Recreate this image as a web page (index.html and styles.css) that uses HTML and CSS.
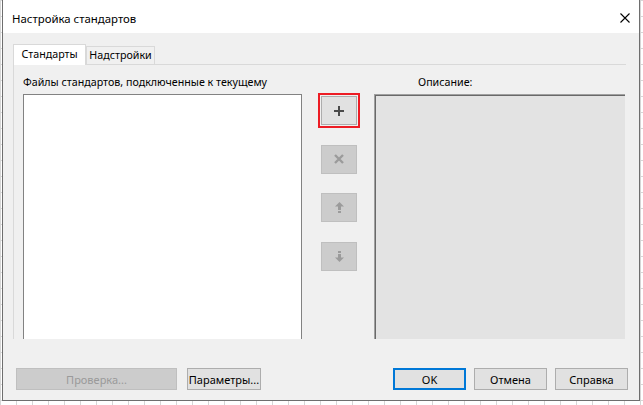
FILE: index.html
```html
<!DOCTYPE html>
<html lang="ru">
<head>
<meta charset="utf-8">
<title>Настройка стандартов</title>
<link rel="stylesheet" href="styles.css">
</head>
<body>
<div class="dialog">
  <div class="titlebar">
    <span class="title">Настройка стандартов</span>
    <svg class="close" width="10" height="10" viewBox="0 0 10 10"><path d="M0.5 0.5 L9.5 9.5 M9.5 0.5 L0.5 9.5" stroke="#000" stroke-width="1.1" fill="none"/></svg>
  </div>
  <div class="content">
    <div class="tabs">
      <div class="tab active">Стандарты</div>
      <div class="tab inactive">Надстройки</div>
    </div>
    <div class="panel">
      <div class="col-list">
        <div class="label">Файлы стандартов, подключенные к текущему</div>
        <div class="listbox"></div>
      </div>
      <div class="col-buttons">
        <div class="icon-btn focused">
          <svg width="10" height="10" viewBox="0 0 10 10"><path d="M5 0 V10 M0 5 H10" stroke="#4a4a4a" stroke-width="2" fill="none"/></svg>
        </div>
        <div class="icon-btn disabled">
          <svg width="10" height="10" viewBox="0 0 10 10"><path d="M1 1 L9 9 M9 1 L1 9" stroke="#9b9b9b" stroke-width="2.4" fill="none"/></svg>
        </div>
        <div class="icon-btn disabled">
          <svg width="9" height="11" viewBox="0 0 9 11"><path d="M0 4.5 L4.5 0 L9 4.5 Z" fill="#9b9b9b"/><rect x="3" y="4" width="3" height="4" fill="#9b9b9b"/><rect x="3" y="9" width="3" height="2" fill="#9b9b9b"/></svg>
        </div>
        <div class="icon-btn disabled">
          <svg width="9" height="11" viewBox="0 0 9 11"><rect x="3" y="0" width="3" height="2" fill="#9b9b9b"/><rect x="3" y="3" width="3" height="4" fill="#9b9b9b"/><path d="M0 6.5 L4.5 11 L9 6.5 Z" fill="#9b9b9b"/></svg>
        </div>
      </div>
      <div class="col-desc">
        <div class="label desc-label">Описание:</div>
        <div class="descbox"></div>
      </div>
    </div>
    <div class="bottom">
      <div class="btn disabled w-check">Проверка...</div>
      <div class="btn w-params">Параметры...</div>
      <div class="spacer"></div>
      <div class="btn default w-std">OK</div>
      <div class="btn w-std">Отмена</div>
      <div class="btn w-std">Справка</div>
    </div>
  </div>
</div>
</body>
</html>
```

FILE: styles.css
```css
* { box-sizing: border-box; }
html, body { margin: 0; padding: 0; }
body {
  width: 643px;
  height: 405px;
  overflow: hidden;
  padding-left: 2px;
  background-color: #ffffff;
  background-image:
    linear-gradient(to right, #d6d6d6 1px, transparent 1px),
    linear-gradient(to bottom, #d6d6d6 1px, transparent 1px);
  background-size: 16px 16px;
  font-family: "Noto Sans", "Open Sans", sans-serif;
  font-size: 10.7px;
  color: #000;
}
.dialog {
  width: 638px;
  height: 401px;
  border: 1px solid #6e6e6e;
  border-top: none;
  display: flex;
  flex-direction: column;
  background: #f0f0f0;
}
.titlebar {
  height: 33px;
  flex: none;
  background: #fff;
  display: flex;
  align-items: center;
  padding: 4px 9px 0 9px;
}
.title {
  font-size: 11.4px;
  flex: 1;
}
.close { display: block; margin-top: -1px; }
.content {
  flex: 1;
  display: flex;
  flex-direction: column;
  padding: 11px 11px 10px 10px;
}
.tabs {
  display: flex;
  align-items: flex-end;
  height: 20px;
  position: relative;
  z-index: 1;
}
.tab {
  height: 18px;
  border: 1px solid #d9d9d9;
  border-bottom: none;
  background: #f0f0f0;
  line-height: 16px;
  text-align: center;
  white-space: nowrap;
}
.tab.inactive { width: 69px; }
.tab.active {
  width: 73px;
  height: 21px;
  margin-bottom: -1px;
  background: #fff;
  padding-top: 1px;
}
.panel {
  height: 275px;
  width: 613px;
  border-top: 1px solid #d9d9d9;
  border-left: 1px solid #d9d9d9;
  overflow: hidden;
  display: flex;
  padding: 10px 0 0 9px;
}
.label {
  height: 14px;
  line-height: 14px;
  white-space: nowrap;
}
.col-list { width: 279px; }
.listbox {
  margin-top: 5px;
  width: 279px;
  height: 270px;
  background: #fff;
  border: 1px solid #828282;
}
.col-buttons {
  margin-left: 19px;
  width: 36px;
  padding-top: 21px;
  display: flex;
  flex-direction: column;
  gap: 19.6px;
}
.icon-btn {
  width: 36px;
  height: 29px;
  flex: none;
  background: #e1e1e1;
  border: 1px solid #adadad;
  display: flex;
  align-items: center;
  justify-content: center;
}
.icon-btn svg { display: block; }
.icon-btn.focused {
  outline: 2px solid #ed1c24;
  outline-offset: 1px;
}
.icon-btn.disabled {
  background: #cccccc;
  border-color: #bfbfbf;
}
.col-desc {
  margin-left: 17px;
  width: 251px;
}
.desc-label { padding-left: 44px; }
.descbox {
  margin-top: 5px;
  height: 270px;
  background: #e3e3e3;
  border-top: 1px solid #a0a0a0;
  border-left: 1px solid #a0a0a0;
  box-shadow: inset 1px 1px 0 #696969;
}
.bottom {
  margin-top: auto;
  display: flex;
  padding-left: 3px;
  gap: 8px;
}
.btn {
  height: 22px;
  background: #e1e1e1;
  border: 1px solid #adadad;
  display: flex;
  align-items: center;
  justify-content: center;
  white-space: nowrap;
  font-size: 11px;
}
.btn.disabled {
  background: #cccccc;
  border-color: #bfbfbf;
  color: #9a9a9a;
}
.btn.default { border: 2px solid #0078d7; }
.w-check { width: 161px; margin-right: 2px; }
.w-params { width: 74px; }
.w-std { width: 73px; }
.spacer { flex: 1; }
```
